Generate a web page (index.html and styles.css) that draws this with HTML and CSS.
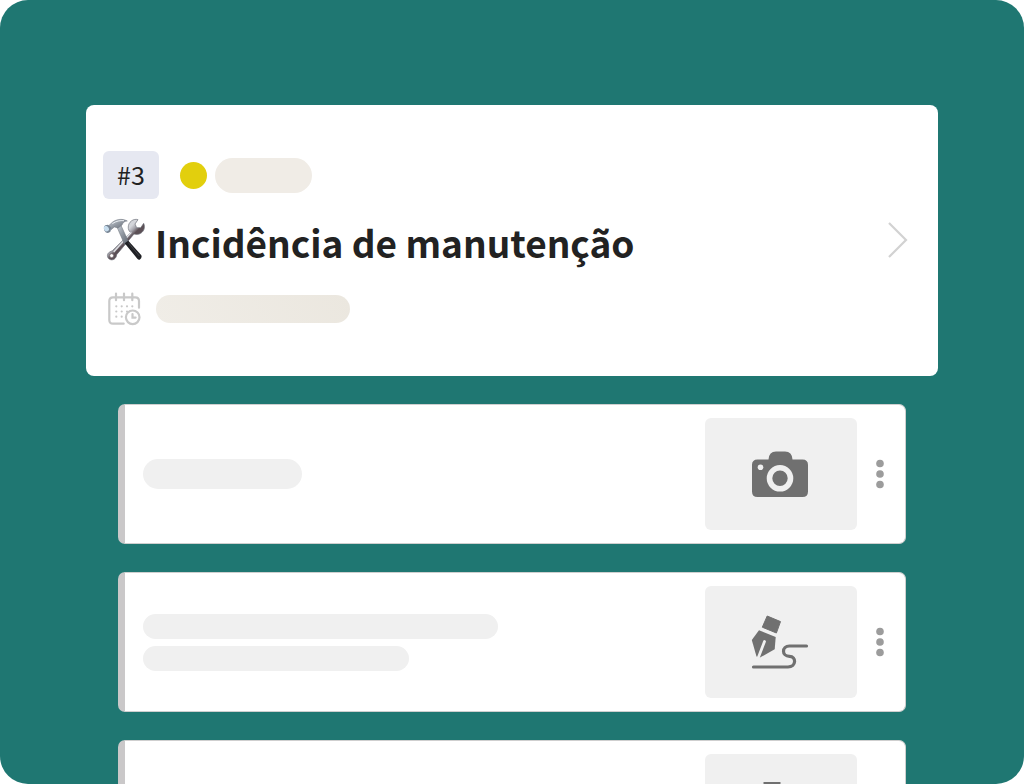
FILE: index.html
```html
<!DOCTYPE html>
<html lang="pt">
<head>
<meta charset="utf-8">
<meta name="viewport" content="width=device-width, initial-scale=1">
<title>Incidência de manutenção</title>
<link rel="stylesheet" href="styles.css">
</head>
<body>
<main class="stage">
  <section class="summary">
    <div class="summary-body">
      <div class="meta">
        <span class="number">#3</span>
        <span class="status"></span>
        <span class="pill pill-status"></span>
      </div>
      <h1 class="title">
        <svg class="tools" viewBox="15 15 132 132" aria-hidden="true">
          <defs>
            <linearGradient id="steel" x1="0" y1="0" x2="1" y2="1">
              <stop offset="0" stop-color="#c9d0d8"/><stop offset=".5" stop-color="#8e959e"/><stop offset="1" stop-color="#5f6670"/>
            </linearGradient>
            <linearGradient id="shaft" gradientUnits="userSpaceOnUse" x1="58" y1="84" x2="74" y2="100">
              <stop offset="0" stop-color="#d3d5da"/><stop offset=".5" stop-color="#a3a2aa"/><stop offset="1" stop-color="#5c5056"/>
            </linearGradient>
          </defs>
          <path d="M98 62 C88 54 88 36 100 27 C106 22 114 21 120 23 L111 36 L116 47 L128 47 L137 34 C143 47 137 61 124 66 C118 68 112 67 108 66 L56 128 C55 140 44 147 35 142 C26 137 26 125 35 120 L43 116 Z" fill="url(#shaft)" stroke="#6d7079" stroke-width="2"/>
          <path d="M100 61 L47 120" stroke="#e0e2e6" stroke-width="4" fill="none"/>
          <circle cx="41" cy="131" r="6" fill="#fff" stroke="#67595e" stroke-width="2"/>
          <path d="M56 43 L68 38 L91 88 L80 98 Z" fill="url(#steel)" stroke="#666c75" stroke-width="1.5"/>
          <path d="M80 94 L91 86 L130 130 Q133 138 125 143 Q121 144 118 140 Z" fill="#202125"/>
          <path d="M91 92 L124 132" stroke="#53545a" stroke-width="2"/>
          <path d="M32 41 L44 30 C58 20 75 20 88 27 C81 27 76 30 72 39 L60 48 L49 45 L39 53 Z" fill="url(#steel)" stroke="#6c737c" stroke-width="1.5"/>
          <path d="M43 35 C55 27 66 25 78 26" stroke="#e9edf1" stroke-width="3" fill="none"/>
          <path d="M18 45 Q20 38 30 38 L39 46 L38 58 Q31 66 23 61 Q16 54 18 45 Z" fill="#778493"/>
          <ellipse cx="25" cy="50" rx="7" ry="9" fill="#c6dced" transform="rotate(-35 25 50)"/>
        </svg>
        <span>Incidência de manutenção</span>
      </h1>
      <div class="schedule">
        <svg class="calendar" viewBox="0 0 34 34" fill="none" stroke="#c9c9c9" stroke-width="2.200" stroke-linecap="round" aria-hidden="true">
          <path d="M15.700 31.700H5Q1.300 31.700 1.300 28V9Q1.300 5.300 5 5.300H27.300Q31 5.300 31 9V15.700"/>
          <path d="M8 1.600V8.200M16 1.600V8.200M24.300 1.600V8.200"/>
          <path d="M8.300 14.300h.01M13.700 14.300h.01M19 14.300h.01M24.300 14.300h.01M8.300 19.500h.01M13.700 19.500h.01M19 19.500h.01M8.300 24.700h.01M13.700 24.700h.01"/>
          <circle cx="24.700" cy="25.300" r="6.800"/>
          <path d="M24.500 22V25.600H27.600"/>
        </svg>
        <span class="pill pill-date"></span>
      </div>
    </div>
    <button class="open" type="button" aria-label="Abrir">
      <svg class="chevron" viewBox="0 0 20 36" fill="none" stroke="#d2d2d2" stroke-width="2.200" aria-hidden="true"><path d="M1 1L18 18L1 35"/></svg>
    </button>
  </section>

  <ul class="tasks">
    <li class="task">
      <div class="lines"><span class="pill pill-single"></span></div>
      <button class="thumb" type="button" aria-label="Fotografia">
        <svg class="icon" viewBox="1 0 56 56" aria-hidden="true">
          <path fill="#707070" d="M5.500 13.500H16.500Q17 5.500 24 5.500H33Q40 5.500 40.500 13.500H50.500Q56 13.500 56 19V45.500Q56 51 50.500 51H5.500Q0 51 0 45.500V19Q0 13.500 5.500 13.500Z"/>
          <circle cx="28" cy="32.300" r="10.500" fill="none" stroke="#f0f0f0" stroke-width="5.600"/>
          <circle cx="8.500" cy="21.300" r="2.800" fill="#f0f0f0"/>
        </svg>
      </button>
      <button class="more" type="button" aria-label="Mais opções">
        <svg class="dots" viewBox="0 0 8 30" fill="#9c9c9c" aria-hidden="true"><circle cx="4" cy="4.500" r="3.800"/><circle cx="4" cy="15" r="3.800"/><circle cx="4" cy="25.500" r="3.800"/></svg>
      </button>
    </li>
    <li class="task">
      <div class="lines"><span class="pill pill-long"></span><span class="pill pill-medium"></span></div>
      <button class="thumb" type="button" aria-label="Assinatura">
        <svg class="icon" viewBox="1 0 56 56" aria-hidden="true">
          <path fill="#707070" stroke="#707070" stroke-width="1" stroke-linejoin="round" d="M15.200 2L28.500 7.600L24.400 19L10.300 13.200Z"/>
          <path fill="#707070" d="M7 16.300L23.700 23L22.700 35.300L8 43.500L4.500 42.500L-.200 26Z"/>
          <path d="M12.500 27.500L6 44.500" stroke="#f0f0f0" stroke-width="2.800" stroke-linecap="round"/>
          <path d="M1.500 53H36C44.500 53 44.500 42.300 37.500 42.300C29.500 42.300 29.500 32 37.500 32H54.500" fill="none" stroke="#707070" stroke-width="3.200" stroke-linecap="round"/>
        </svg>
      </button>
      <button class="more" type="button" aria-label="Mais opções">
        <svg class="dots" viewBox="0 0 8 30" fill="#9c9c9c" aria-hidden="true"><circle cx="4" cy="4.500" r="3.800"/><circle cx="4" cy="15" r="3.800"/><circle cx="4" cy="25.500" r="3.800"/></svg>
      </button>
    </li>
    <li class="task">
      <div class="lines"><span class="pill pill-single"></span></div>
      <button class="thumb" type="button" aria-label="Anexo">
        <svg class="icon" viewBox="1 0 56 56" fill="#707070" aria-hidden="true"><path d="M11.500 0H28.500V8H40V56H0V8H11.500Z"/></svg>
      </button>
      <button class="more" type="button" aria-label="Mais opções">
        <svg class="dots" viewBox="0 0 8 30" fill="#9c9c9c" aria-hidden="true"><circle cx="4" cy="4.500" r="3.800"/><circle cx="4" cy="15" r="3.800"/><circle cx="4" cy="25.500" r="3.800"/></svg>
      </button>
    </li>
  </ul>
</main>
</body>
</html>
```
FILE: styles.css
```css
* { box-sizing: border-box; }
body {
  margin: 0;
  background: #fff;
  color: #222;
  font-family: "Noto Sans CJK JP", "Noto Sans", sans-serif;
}
button { margin: 0; padding: 0; border: 0; background: none; cursor: pointer; }
svg { display: block; flex: none; overflow: visible; }

.stage {
  display: flex;
  flex-direction: column;
  gap: 28px;
  height: 100vh;
  padding: 105px 86px 0;
  overflow: hidden;
  border-radius: 28px;
  background: #1f7772;
}

.summary {
  display: flex;
  flex: none;
  align-items: center;
  justify-content: space-between;
  padding: 46px 30px 50px 17px;
  border-radius: 8px;
  background: #fff;
}
.meta { display: flex; align-items: center; }
.number {
  padding: 0 14px 2px;
  border-radius: 6px;
  background: #e6e8f1;
  font-size: 25px;
  line-height: 46px;
}
.status {
  width: 27px;
  height: 27px;
  margin: 0 8px 0 21px;
  border-radius: 50%;
  background: #e2cf0d;
}
.title {
  display: flex;
  align-items: center;
  gap: 8px;
  margin: 16px 0 23px;
  font-size: 37px;
  font-weight: 700;
  line-height: 54px;
}
.tools { width: 44px; height: 44px; margin-bottom: 6px; }
.schedule { display: flex; align-items: center; gap: 14px; padding-left: 5px; }
.calendar { width: 34px; height: 34px; }
.open { margin-top: 2px; }
.chevron { width: 20px; height: 36px; }

.pill { display: block; border-radius: 20px; background: #f0f0f0; }
.pill-status { width: 97px; height: 35px; background: #f0ece6; }
.pill-date { width: 194px; height: 28px; background: linear-gradient(60deg, #f0ede7, #ebe7df); }
.pill-single { width: 159px; height: 30px; }
.pill-long { width: 355px; height: 25px; }
.pill-medium { width: 266px; height: 25px; }

.tasks {
  display: flex;
  flex: none;
  flex-direction: column;
  gap: 28px;
  margin: 0;
  padding: 0 32px;
  list-style: none;
}
.task {
  display: flex;
  align-items: center;
  padding: 13px 0 13px 18px;
  border: 1px solid #cfcfcf;
  border-left: 7px solid #cac8c9;
  border-radius: 7px;
  background: #fff;
}
.lines { display: flex; flex: 1; flex-direction: column; gap: 7px; }
.thumb {
  display: flex;
  align-items: center;
  justify-content: center;
  width: 152px;
  height: 112px;
  border-radius: 6px;
  background: #f0f0f0;
}
.icon { width: 56px; height: 56px; }
.more { display: flex; justify-content: center; width: 48px; padding: 0 2px 0 0; }
.dots { width: 8px; height: 30px; }
```
